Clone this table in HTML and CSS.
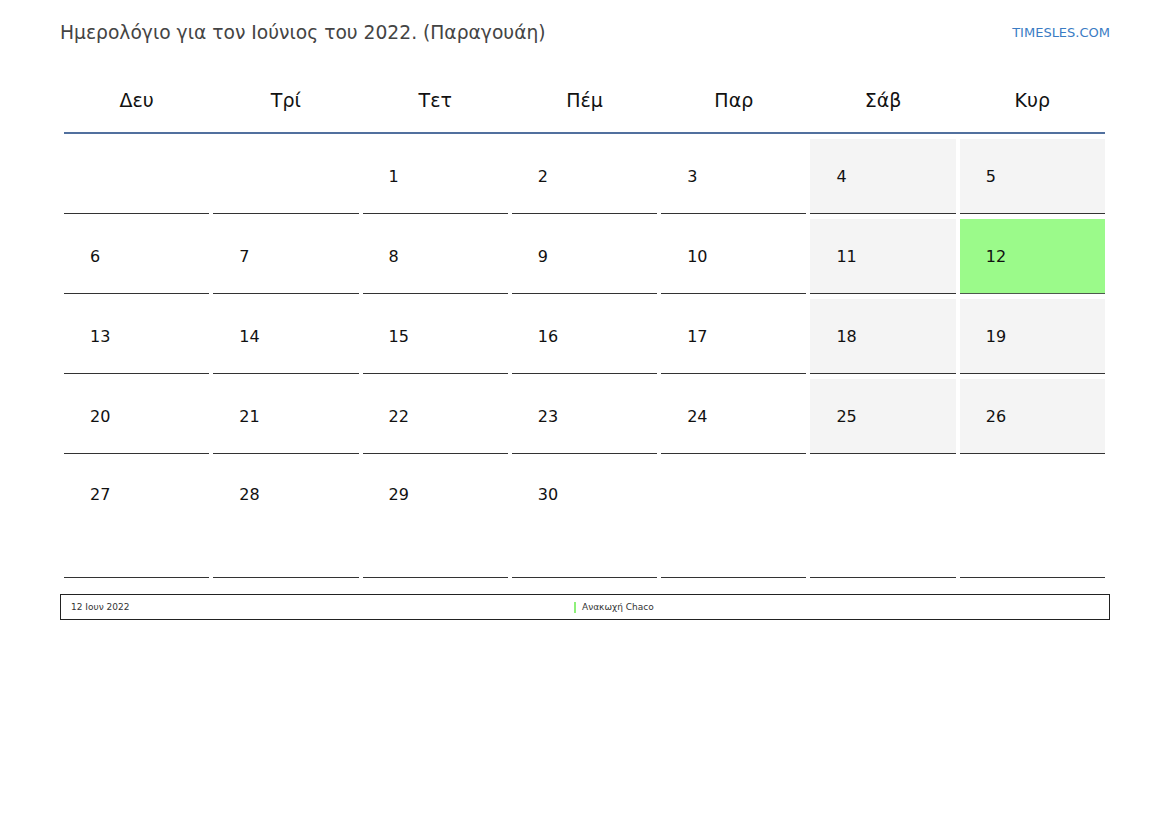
FILE: index.html
```html
<!DOCTYPE html>
<html lang="el">
<head>
<meta charset="utf-8">
<title>Ημερολόγιο Ιούνιος 2022</title>
<link rel="stylesheet" href="styles.css">
</head>
<body>
<div class="page">
  <header class="top">
    <h1 class="title">Ημερολόγιο για τον Ιούνιος του 2022. (Παραγουάη)</h1>
    <a class="brand">TIMESLES.COM</a>
  </header>
  <div class="cal">
    <div class="head">
      <div>Δευ</div><div>Τρί</div><div>Τετ</div><div>Πέμ</div><div>Παρ</div><div>Σάβ</div><div>Κυρ</div>
    </div>
    <div class="grid">
      <div class="cell"></div><div class="cell"></div><div class="cell">1</div><div class="cell">2</div><div class="cell">3</div><div class="cell we">4</div><div class="cell we">5</div>
      <div class="cell">6</div><div class="cell">7</div><div class="cell">8</div><div class="cell">9</div><div class="cell">10</div><div class="cell we">11</div><div class="cell hol">12</div>
      <div class="cell">13</div><div class="cell">14</div><div class="cell">15</div><div class="cell">16</div><div class="cell">17</div><div class="cell we">18</div><div class="cell we">19</div>
      <div class="cell">20</div><div class="cell">21</div><div class="cell">22</div><div class="cell">23</div><div class="cell">24</div><div class="cell we">25</div><div class="cell we">26</div>
      <div class="cell last">27</div><div class="cell last">28</div><div class="cell last">29</div><div class="cell last">30</div><div class="cell last"></div><div class="cell last"></div><div class="cell last"></div>
    </div>
  </div>
  <div class="legend">
    <span class="ldate">12 Ιουν 2022</span>
    <span class="lname"><i class="bar"></i>Ανακωχή Chaco</span>
  </div>
</div>
</body>
</html>
```

FILE: styles.css
```css
html, body {
  margin: 0;
  padding: 0;
  background: #fff;
}
body {
  font-family: "DejaVu Sans", "Noto Sans", sans-serif;
  color: #111;
}
.page {
  width: 1050px;
  padding: 20px 0 0 60px;
}
.top {
  display: flex;
  justify-content: space-between;
  align-items: center;
  height: 26px;
}
.title {
  margin: 0;
  font-size: 18.7px;
  font-weight: normal;
  color: #444;
  line-height: 26px;
}
.brand {
  font-size: 13px;
  color: #3a7cc4;
  text-decoration: none;
  margin-top: -2px;
}
.cal {
  margin: 24px 5px 0 4px;
}
.head {
  display: grid;
  grid-template-columns: repeat(7, 1fr);
  column-gap: 4px;
  border-bottom: 2px solid #51709e;
  height: 62px;
}
.head div {
  text-align: center;
  font-size: 19px;
  line-height: 20px;
  padding-top: 20px;
  color: #111;
}
.grid {
  display: grid;
  grid-template-columns: repeat(7, 1fr);
  grid-template-rows: repeat(4, 75px) 119px;
  gap: 5px 4px;
  margin-top: 5px;
}
.cell {
  border-bottom: 1px solid #333;
  display: flex;
  align-items: center;
  padding-left: 26px;
  font-size: 16px;
  color: #111;
}
.cell.last {
  align-items: flex-start;
  padding-top: 26px;
  box-sizing: border-box;
}
.cell.we {
  background: #f4f4f4;
}
.cell.hol {
  background: #9bfa8a;
  border-bottom-color: #4d5a4d;
}
.legend {
  margin-top: 16px;
  height: 24px;
  border: 1px solid #222;
  display: flex;
  align-items: center;
  font-size: 9px;
  color: #333;
}
.ldate {
  padding-left: 10px;
  width: 503px;
}
.lname {
  display: flex;
  align-items: center;
}
.bar {
  display: inline-block;
  width: 2px;
  height: 11px;
  background: #8ef07a;
  margin-right: 6px;
}
```
